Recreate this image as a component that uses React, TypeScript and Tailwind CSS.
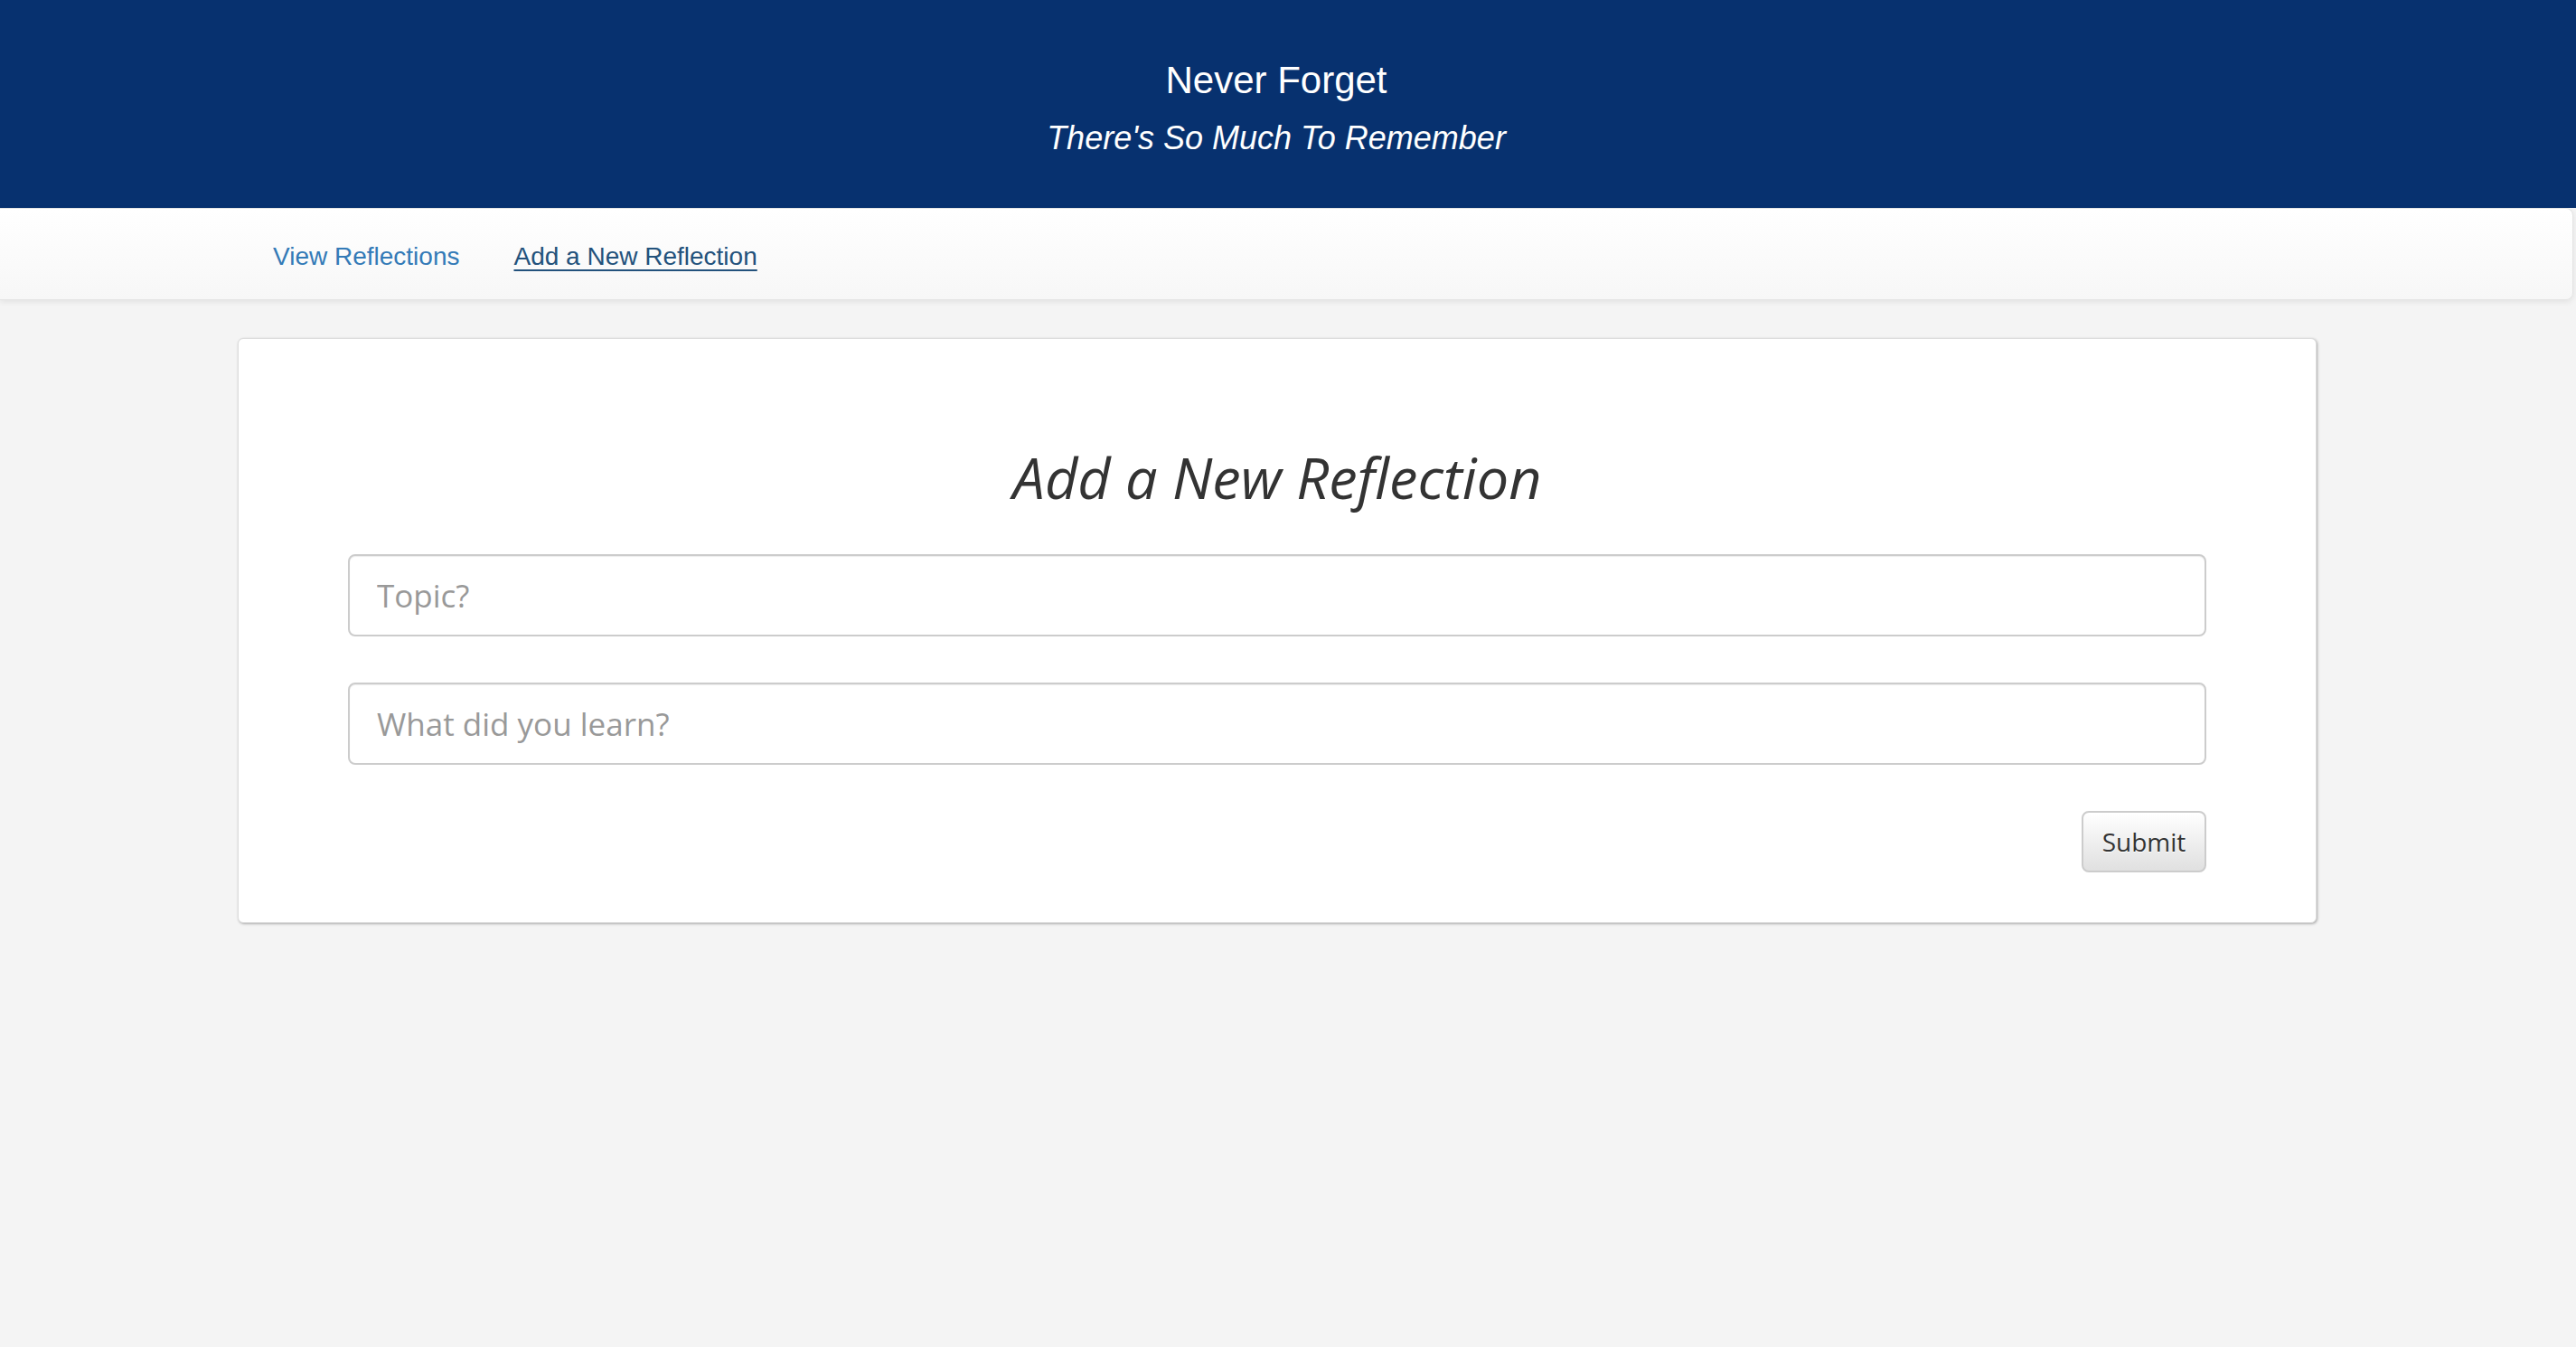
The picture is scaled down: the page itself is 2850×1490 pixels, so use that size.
const NAV_LINKS = [
  { name: 'View Reflections', active: false },
  { name: 'Add a New Reflection', active: true }
]

const Header = () => {
  return (
    <header className="flex h-[230px] flex-col items-center bg-[#07316f] pr-[26px] pt-[68px] font-['Liberation_Sans',Arial,sans-serif] text-white">
      <h1 className="text-[42px] leading-none">Never Forget</h1>
      <h2 className="mt-[25px] text-[36px] italic leading-none">
        There's So Much To Remember
      </h2>
    </header>
  )
}

const NavBar = () => {
  return (
    <nav className="mr-[3px] flex h-[102px] items-center gap-[60px] rounded-r-lg border border-l-0 border-[#e4e4e4] bg-linear-to-b from-white to-[#f7f7f7] pl-[302px] pt-[5px] font-['Liberation_Sans',Arial,sans-serif] text-[28px] leading-none shadow-[0_2px_6px_rgba(0,0,0,0.08)]">
      {NAV_LINKS.map(({ name, active }) => (
        <a
          key={name}
          href="#"
          className={
            active
              ? 'text-[#23527c] underline decoration-2 underline-offset-[5px]'
              : 'text-[#337ab7]'
          }
        >
          {name}
        </a>
      ))}
    </nav>
  )
}

const ReflectionForm = () => {
  return (
    <div className="flex flex-col rounded-md border border-[#dcdcdc] bg-white px-[121px] pb-[55px] pt-[121px] shadow-[1px_1px_3px_rgba(0,0,0,0.3)]">
      <h2 className="text-center font-['Open_Sans',sans-serif] text-[63px] italic leading-none text-[#333]">
        Add a New Reflection
      </h2>
      <input
        type="text"
        placeholder="Topic?"
        className="mt-[54px] h-[91px] rounded-lg border-2 border-[#ccc] bg-white pl-[30px] font-['Open_Sans',sans-serif] text-[35px] text-[#555] shadow-[inset_0_1px_1px_rgba(0,0,0,0.075)] outline-none placeholder:text-[#999]"
      />
      <input
        type="text"
        placeholder="What did you learn?"
        className="mt-[51px] h-[91px] rounded-lg border-2 border-[#ccc] bg-white pl-[30px] font-['Open_Sans',sans-serif] text-[35px] text-[#555] shadow-[inset_0_1px_1px_rgba(0,0,0,0.075)] outline-none placeholder:text-[#999]"
      />
      <button
        type="button"
        className="mt-[51px] h-[68px] w-[138px] self-end rounded-lg border-2 border-[#ccc] bg-linear-to-b from-white to-[#e0e0e0] font-['Open_Sans',sans-serif] text-[28px] text-[#333] [text-shadow:0_1px_0_#fff]"
      >
        Submit
      </button>
    </div>
  )
}

export default function App() {
  return (
    <div className="min-h-screen bg-[#f4f4f4]">
      <Header />
      <NavBar />
      <main className="pl-[263px] pr-[287px] pt-[42px]">
        <ReflectionForm />
      </main>
    </div>
  )
}
